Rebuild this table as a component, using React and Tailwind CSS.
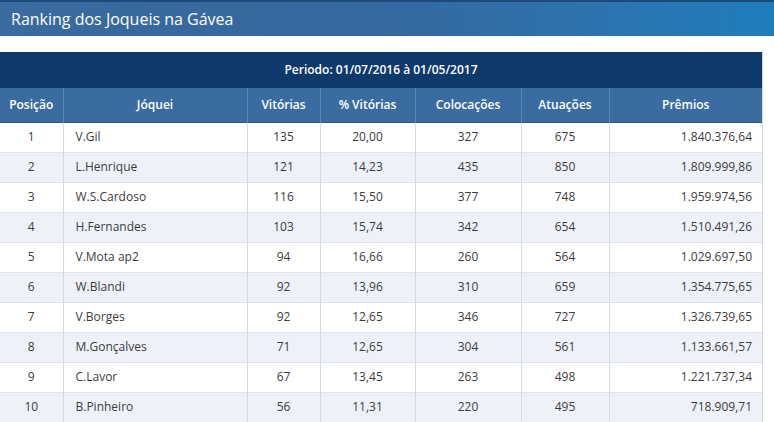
import React from 'react';

const rows = [
    ['1', 'V.Gil', '135', '20,00', '327', '675', '1.840.376,64'],
    ['2', 'L.Henrique', '121', '14,23', '435', '850', '1.809.999,86'],
    ['3', 'W.S.Cardoso', '116', '15,50', '377', '748', '1.959.974,56'],
    ['4', 'H.Fernandes', '103', '15,74', '342', '654', '1.510.491,26'],
    ['5', 'V.Mota ap2', '94', '16,66', '260', '564', '1.029.697,50'],
    ['6', 'W.Blandi', '92', '13,96', '310', '659', '1.354.775,65'],
    ['7', 'V.Borges', '92', '12,65', '346', '727', '1.326.739,65'],
    ['8', 'M.Gonçalves', '71', '12,65', '304', '561', '1.133.661,57'],
    ['9', 'C.Lavor', '67', '13,45', '263', '498', '1.221.737,34'],
    ['10', 'B.Pinheiro', '56', '11,31', '220', '495', '718.909,71'],
];

const headers = ['Posição', 'Jóquei', 'Vitórias', '% Vitórias', 'Colocações', 'Atuações', 'Prêmios'];
const widths = ['w-[63px]', 'w-[184px]', 'w-[73px]', 'w-[95px]', 'w-[106px]', 'w-[88px]', 'w-[153px]'];

export default function App() {
    return (
        <div className="w-[774px] h-[422px] overflow-hidden bg-white font-['Open_Sans',sans-serif]">
            {/* Page title */}
            <div className="h-[36px] border-t-2 border-[#1d4a7b] bg-gradient-to-r from-[#3a6a9e] via-[#35689f] to-[#1e7dbb] flex items-center pl-[11px]">
                <h1 className="text-[16px] text-white leading-none">Ranking dos Joqueis na Gávea</h1>
            </div>

            <div className="mt-[16px] w-[763px] border-r border-[#d3d8df]">
                <table className="w-[762px] table-fixed border-collapse text-[12px]">
                    <colgroup>
                        {widths.map((w, i) => (
                            <col key={i} className={w} />
                        ))}
                    </colgroup>
                    <thead>
                        <tr className="h-[36px] bg-[#0e3a6b]">
                            <th colSpan={7} className="text-white font-semibold text-[12px] text-center">
                                Periodo: 01/07/2016 à 01/05/2017
                            </th>
                        </tr>
                        <tr className="h-[34px] bg-[#3b6ca1] border-b border-[#2a5a8d]">
                            {headers.map((h, i) => (
                                <th
                                    key={h}
                                    className={`text-white font-semibold text-center ${i < 6 ? 'border-r border-[#5b86b4]' : ''}`}
                                >
                                    {h}
                                </th>
                            ))}
                        </tr>
                    </thead>
                    <tbody className="text-[#3c3c3c]">
                        {rows.map((r, idx) => (
                            <tr
                                key={r[0]}
                                className={`h-[30px] border-b border-[#dde2e8] ${idx % 2 === 1 ? 'bg-[#eef2f8]' : 'bg-white'}`}
                            >
                                <td className="text-center border-r border-[#d6dbe2]">{r[0]}</td>
                                <td className="text-left pl-[12px] border-r border-[#d6dbe2]">{r[1]}</td>
                                <td className="text-center border-r border-[#d6dbe2]">{r[2]}</td>
                                <td className="text-center border-r border-[#d6dbe2]">{r[3]}</td>
                                <td className="text-center border-r border-[#d6dbe2]">{r[4]}</td>
                                <td className="text-center border-r border-[#d6dbe2]">{r[5]}</td>
                                <td className="text-right pr-[10px]">{r[6]}</td>
                            </tr>
                        ))}
                    </tbody>
                </table>
            </div>
        </div>
    );
}
